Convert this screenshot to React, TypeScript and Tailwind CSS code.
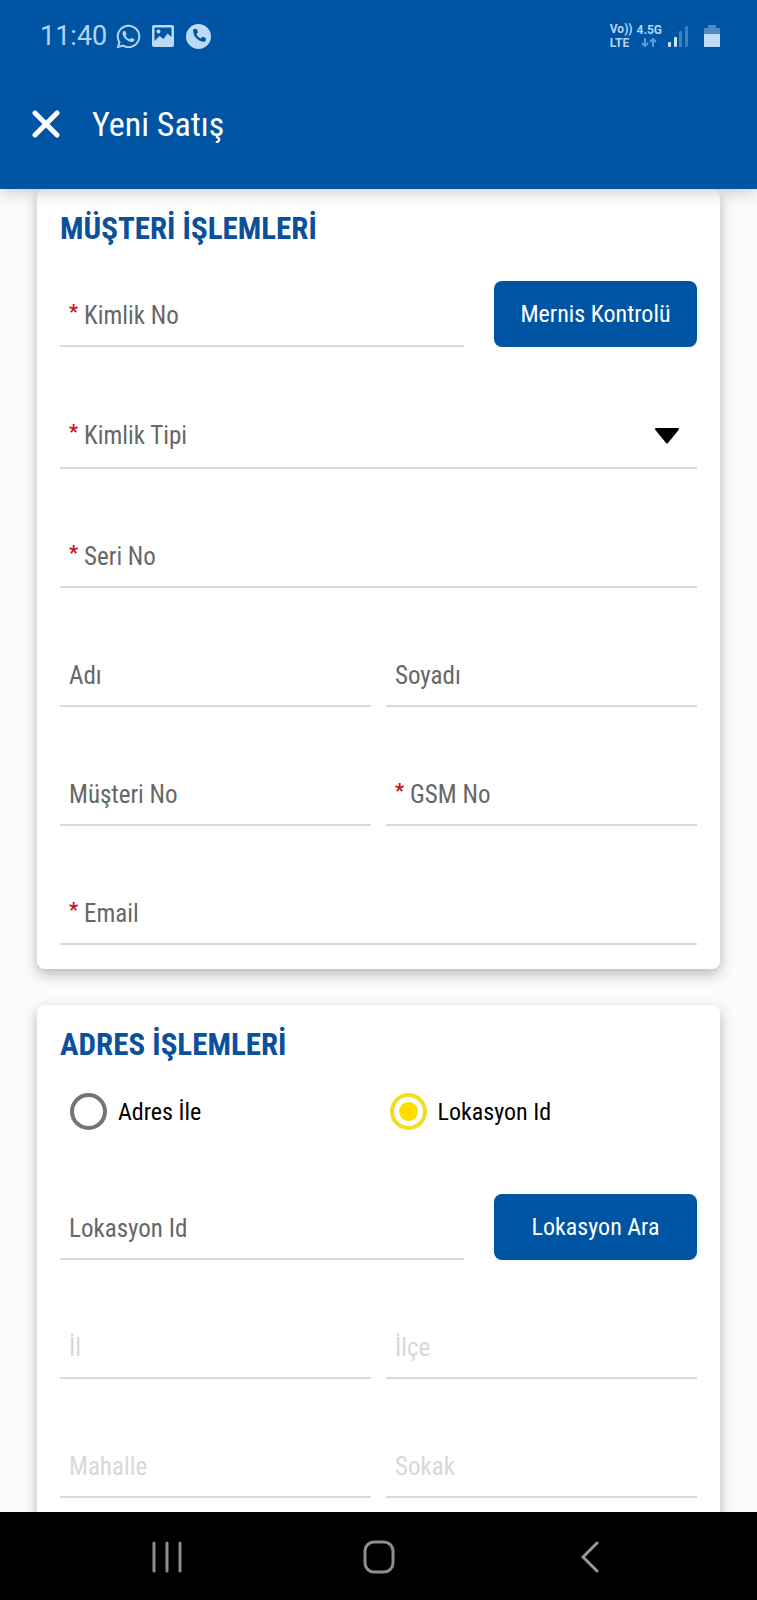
import React from 'react';
import { FaWhatsapp } from 'react-icons/fa';

interface FieldProps {
    id: string;
    label: string;
    required?: boolean;
    disabled?: boolean;
}

const FieldLabel: React.FC<FieldProps> = ({ id, label, required, disabled }) => (
    <label
        htmlFor={id}
        className={`flex shrink-0 gap-1.5 text-[25px] leading-8 ${disabled ? 'text-[#d8d8d8]' : 'text-[#676767]'}`}
    >
        {required && <span className="-mt-0.5 text-xl font-bold text-[#c4161c]">*</span>}
        {label}
    </label>
);

const Field: React.FC<FieldProps> = (props) => (
    <div className="flex h-[66px] min-w-0 flex-1 items-center gap-2 border-b-2 border-[#d9d9d9] px-[9px] pt-1.5">
        <FieldLabel {...props} />
        <input
            id={props.id}
            type="text"
            disabled={props.disabled}
            className="h-full w-full min-w-0 flex-1 bg-transparent text-[25px] outline-none"
        />
    </div>
);

const SelectField: React.FC<FieldProps> = (props) => (
    <div className="flex h-[69px] min-w-0 flex-1 items-center gap-2 border-b-2 border-[#d9d9d9] px-[9px] pt-1">
        <FieldLabel {...props} />
        <select id={props.id} className="h-full min-w-0 flex-1 appearance-none bg-transparent text-[25px] outline-none">
            <option value=""></option>
        </select>
        <svg className="pointer-events-none mr-2 h-4 w-[26px]" viewBox="0 0 26 16">
            <path d="M2 1H24L13 14.500Z" stroke="#000" strokeWidth="2" strokeLinejoin="round" />
        </svg>
    </div>
);

const ActionButton: React.FC<{ children: React.ReactNode }> = ({ children }) => (
    <button type="button" className="h-[66px] w-[203px] shrink-0 rounded-lg bg-[#0054a4] text-2xl text-white">
        {children}
    </button>
);

const Card: React.FC<{ title: string; children: React.ReactNode }> = ({ title, children }) => (
    <section className="rounded-lg bg-white px-[23px] pt-5 pb-6 shadow-[0_5px_14px_rgba(0,0,0,0.28)]">
        <h2 className="text-[31px] leading-10 font-bold text-[#0b509b]">{title}</h2>
        {children}
    </section>
);

const RADIO_OPTIONS = [
    { id: 'adres', label: 'Adres İle' },
    { id: 'lokasyon', label: 'Lokasyon Id' },
];

const StatusBar = () => (
    <div className="flex h-[72px] items-center justify-between pr-[37px] pl-10 text-[#b4d3f2]">
        <div className="flex items-center">
            <span className="font-['Roboto',sans-serif] text-[27px]">11:40</span>
            <FaWhatsapp className="ml-2" size={27} />
            <svg className="ml-2.5" width="22" height="22" viewBox="0 0 22 22">
                <rect width="22" height="22" rx="2" fill="#bcd9f6" />
                <path d="M2.500 2.500H19.500V12L15.500 8.500 11.500 14 7.500 11 2.500 16Z" fill="#0054a4" />
                <circle cx="6.500" cy="6.500" r="2" fill="#bcd9f6" />
            </svg>
            <svg className="ml-3" width="25" height="25" viewBox="0 0 24 24">
                <circle cx="12" cy="12" r="12" fill="#bcd9f6" />
                <path
                    d="M7.600 5.100 9.400 4.600c.5-.1.900.1 1.100.6l.9 2.300c.2.400.1.800-.3 1.100l-1.200 1c.9 1.900 2.400 3.400 4.300 4.300l1-1.200c.3-.4.700-.5 1.100-.3l2.300.9c.5.200.7.600.6 1.100l-.5 1.800c-.1.500-.5.800-1 .8C11.600 17 6.800 12.200 6.800 6.100c0-.5.300-.9.800-1Z"
                    fill="#0054a4"
                />
            </svg>
        </div>
        <div className="flex items-center font-['Roboto',sans-serif] text-xs leading-[14px] font-bold">
            <div>
                <div>Vo))</div>
                <div>LTE</div>
            </div>
            <div className="ml-1 flex flex-col items-center">
                <span>4.5G</span>
                <svg width="16" height="12" viewBox="0 0 16 12" fill="none" stroke="#5f98d2" strokeWidth="2">
                    <path d="M4 1v8M1 6l3 3 3-3M12 10V2M9 5l3-3 3 3" />
                </svg>
            </div>
            <svg className="ml-1.5" width="20" height="22" viewBox="0 0 20 22">
                <rect x="0" y="17" width="3" height="5" rx="1" fill="#cbe3fb" />
                <rect x="6" y="12" width="3" height="10" rx="1" fill="#cbe3fb" />
                <rect x="11" y="6" width="3" height="16" rx="1" fill="#4080c2" />
                <rect x="17" y="1" width="3" height="21" rx="1" fill="#4080c2" />
            </svg>
            <svg className="ml-4" width="16" height="24" viewBox="0 0 16 24">
                <path d="M4 1h8v3h4v7H0V4h4Z" fill="#4f8bc8" />
                <path d="M0 10h16v13H0Z" fill="#c3dcf5" />
            </svg>
        </div>
    </div>
);

const NavBar = () => (
    <nav className="grid h-[88px] shrink-0 grid-cols-[334px_1fr_334px] items-center bg-black pt-0.5">
        <button type="button" aria-label="Recents" className="justify-self-center">
            <svg width="30" height="32" viewBox="0 0 30 32" stroke="#8e8e8e" strokeWidth="3" strokeLinecap="round">
                <path d="M2 2V30M15 2V30M28 2V30" />
            </svg>
        </button>
        <button type="button" aria-label="Home" className="justify-self-center">
            <svg width="34" height="34" viewBox="0 0 34 34" fill="none" stroke="#8e8e8e" strokeWidth="3">
                <rect x="3" y="2" width="28" height="30" rx="9" />
            </svg>
        </button>
        <button type="button" aria-label="Back" className="justify-self-center">
            <svg width="18" height="32" viewBox="0 0 18 32" fill="none" stroke="#999" strokeWidth="3" strokeLinecap="round">
                <path d="M16 2 2 16 16 30" />
            </svg>
        </button>
    </nav>
);

export default function App() {
    const [addressMode, setAddressMode] = React.useState('lokasyon');

    return (
        <div className="flex h-screen flex-col bg-[#fbfbfb] font-['Roboto_Condensed','Roboto',sans-serif]">
            <header className="z-10 h-[189px] shrink-0 bg-[#0054a4] shadow-[0_3px_16px_rgba(0,0,0,0.2)]">
                <StatusBar />
                <div className="flex items-center gap-8 px-8 pt-7 text-white">
                    <button type="button" aria-label="Kapat">
                        <svg width="28" height="28" viewBox="0 0 28 28" stroke="currentColor" strokeWidth="5" strokeLinecap="round">
                            <path d="M3 3 25 25M25 3 3 25" />
                        </svg>
                    </button>
                    <h1 className="text-[34px] leading-12">Yeni Satış</h1>
                </div>
            </header>

            <main className="min-h-0 flex-1 space-y-9 overflow-y-auto px-[37px] [scrollbar-width:none]">
                <Card title="MÜŞTERİ İŞLEMLERİ">
                    <div className="mt-8 space-y-[53px]">
                        <div className="flex gap-[30px]">
                            <Field id="kimlik-no" label="Kimlik No" required />
                            <ActionButton>Mernis Kontrolü</ActionButton>
                        </div>
                        <SelectField id="kimlik-tipi" label="Kimlik Tipi" required />
                        <Field id="seri-no" label="Seri No" required />
                        <div className="flex gap-[15px]">
                            <Field id="adi" label="Adı" />
                            <Field id="soyadi" label="Soyadı" />
                        </div>
                        <div className="flex gap-[15px]">
                            <Field id="musteri-no" label="Müşteri No" />
                            <Field id="gsm-no" label="GSM No" required />
                        </div>
                        <Field id="email" label="Email" required />
                    </div>
                </Card>

                <Card title="ADRES İŞLEMLERİ">
                    <div className="mt-7 grid grid-cols-2 gap-x-3 pl-2.5">
                        {RADIO_OPTIONS.map((option) => (
                            <label key={option.id} className="flex items-center gap-[11px] text-2xl text-black">
                                <input
                                    type="radio"
                                    name="address-mode"
                                    checked={addressMode === option.id}
                                    onChange={() => setAddressMode(option.id)}
                                    className="size-[37px] appearance-none rounded-full border-4 border-[#757575] p-[5px] checked:border-[#f3dc24] checked:bg-[#ffdd00] checked:bg-clip-content"
                                />
                                {option.label}
                            </label>
                        ))}
                    </div>
                    <div className="mt-16 space-y-[53px]">
                        <div className="flex gap-[30px]">
                            <Field id="lokasyon-id" label="Lokasyon Id" />
                            <ActionButton>Lokasyon Ara</ActionButton>
                        </div>
                        <div className="flex gap-[15px]">
                            <Field id="il" label="İl" disabled />
                            <Field id="ilce" label="İlçe" disabled />
                        </div>
                        <div className="flex gap-[15px]">
                            <Field id="mahalle" label="Mahalle" disabled />
                            <Field id="sokak" label="Sokak" disabled />
                        </div>
                    </div>
                </Card>
            </main>

            <NavBar />
        </div>
    );
}
